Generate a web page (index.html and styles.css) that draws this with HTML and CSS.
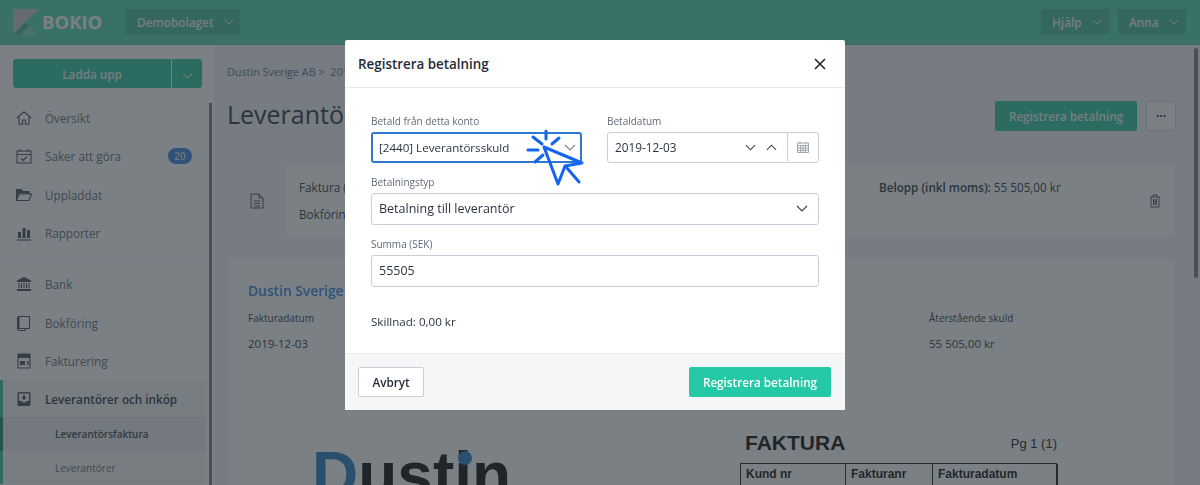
FILE: index.html
```html
<!DOCTYPE html>
<html lang="sv">
<head>
  <meta charset="UTF-8">
  <title>Bokio - Registrera betalning</title>
  <link rel="stylesheet" href="styles.css">
</head>
<body>

<div class="app">
  <header class="topbar">
    <svg class="logo-mark" viewBox="0 0 26 26" width="26" height="26">
      <polygon points="0,0 26,0 12,13 0,26" fill="#c4c8cc"/>
      <polygon points="12,13 26,26 0,26" fill="#7fd8c0"/>
      <polygon points="12,13 16,17 7,26 0,26" fill="#4fb39c"/>
    </svg>
    <span class="logo-text">BOKIO</span>
    <button class="top-btn company">Demobolaget
      <svg class="chev" viewBox="0 0 12 7" width="10" height="6"><path d="M1 1l5 5 5-5"/></svg>
    </button>
    <div class="top-right">
      <button class="top-btn">Hjälp
        <svg class="chev" viewBox="0 0 12 7" width="10" height="6"><path d="M1 1l5 5 5-5"/></svg>
      </button>
      <button class="top-btn">Anna
        <svg class="chev" viewBox="0 0 12 7" width="10" height="6"><path d="M1 1l5 5 5-5"/></svg>
      </button>
    </div>
  </header>

  <div class="layout">
    <aside class="sidebar">
      <div class="upload">
        <button class="upload-main">Ladda upp</button>
        <button class="upload-more">
          <svg class="chev" viewBox="0 0 12 7" width="11" height="6"><path d="M1 1l5 5 5-5"/></svg>
        </button>
      </div>
      <nav class="nav-section">
        <a class="nav-item">
          <svg class="nav-icon" viewBox="0 0 16 16"><path d="M.8 8L8 1.8 15.2 8M3 7v7.2h3.6V10h2.8v4.2H13V7"/></svg>
          Översikt
        </a>
        <a class="nav-item">
          <svg class="nav-icon" viewBox="0 0 16 16"><path d="M1 3h14v12H1zM1 6.5h14M4 1v3M12 1v3M5 10.5l2 2 4-4"/></svg>
          Saker att göra
          <span class="badge">20</span>
        </a>
        <a class="nav-item">
          <svg class="nav-icon" viewBox="0 0 16 16"><path class="solid" d="M.5 2.5h5l1.500 2h6v2H3L.5 13z"/><path d="M.5 13V2.500h5l1.500 2h6v2.500M3 7h12.500l-2.500 6.500H.5z"/></svg>
          Uppladdat
        </a>
        <a class="nav-item">
          <svg class="nav-icon" viewBox="0 0 16 16"><path class="solid" d="M2 7h3v6H2zM6.500 3h3v10h-3zM11 5h3v8h-3z"/><path d="M1 15h14"/></svg>
          Rapporter
        </a>
      </nav>
      <nav class="nav-section second">
        <a class="nav-item">
          <svg class="nav-icon" viewBox="0 0 16 16"><path class="solid" d="M8 1l7 3.500V6H1V4.500zM1 13h14v2H1z"/><path d="M3 7v5M5.500 7v5M8 7v5M10.500 7v5M13 7v5"/></svg>
          Bank
        </a>
        <a class="nav-item">
          <svg class="nav-icon" viewBox="0 0 16 16"><path d="M3 1.500h10.500v12H3zM3 1.500L1.500 2.500v12l2 1h6v-2"/><path class="solid" d="M1.500 2.500L3 1.500v12l-1.500 1z"/></svg>
          Bokföring
        </a>
        <a class="nav-item">
          <svg class="nav-icon" viewBox="0 0 16 16"><path d="M2 1h12v14H2z"/><path class="solid" d="M2 1h12v4H2zM4 8h5v4H4zM11 8h1.500v4H11z"/></svg>
          Fakturering
        </a>
        <a class="nav-item active">
          <svg class="nav-icon" viewBox="0 0 16 16"><path class="solid" fill-rule="evenodd" d="M3 1h10a1.500 1.500 0 0 1 1.500 1.500v11A1.500 1.500 0 0 1 13 15H3a1.500 1.500 0 0 1-1.500-1.500v-11A1.500 1.500 0 0 1 3 1zm0 1.500V10h2.500l1 1.500h3l1-1.500H13V2.500zM7 4h2v2.500h1.700L8 9.200 5.300 6.500H7z"/></svg>
          Leverantörer och inköp
        </a>
        <a class="nav-sub current">Leverantörsfaktura</a>
        <a class="nav-sub">Leverantörer</a>
      </nav>
    </aside>

    <main class="content">
      <div class="breadcrumb">Dustin Sverige AB &gt;&nbsp; 2019-12-03</div>
      <div class="title-row">
        <h1>Leverantörsfaktura</h1>
        <div class="actions">
          <button class="btn-primary">Registrera betalning</button>
          <button class="btn-dots">•••</button>
        </div>
      </div>

      <div class="info-row">
        <svg class="doc-icon" viewBox="0 0 14 16" width="14" height="16"><path d="M1 1h8l4 4v10H1zM9 1v4h4M4 8h6M4 10.500h6M4 13h6"/></svg>
        <div class="info-box">
          <div class="info-left">
            <p>Faktura (inkl moms)</p>
            <p>Bokföring</p>
          </div>
          <div class="info-right"><b>Belopp (inkl moms):</b> 55 505,00 kr</div>
          <svg class="trash-icon" viewBox="0 0 12 14" width="12" height="14"><path d="M1 3h10M4 3V1h4v2M2 3v10h8V3M4.500 5v6M6 5v6M7.500 5v6"/></svg>
        </div>
      </div>

      <section class="invoice">
        <h2>Dustin Sverige AB</h2>
        <div class="invoice-facts">
          <div><span>Fakturadatum</span><p>2019-12-03</p></div>
          <div><span>Förfallodatum</span><p>2020-01-02</p></div>
          <div><span>Fakturanummer</span><p>1234</p></div>
          <div><span>Återstående skuld</span><p>55 505,00 kr</p></div>
        </div>
        <div class="doc">
          <div class="doc-logo"><em>D</em>ustin<i class="doc-logo-dot"></i></div>
          <div class="doc-head">
            <div class="doc-title"><strong>FAKTURA</strong><span>Pg 1 (1)</span></div>
            <div class="doc-table">
              <b>Kund nr</b><b>Fakturanr</b><b>Fakturadatum</b>
            </div>
          </div>
        </div>
      </section>
    </main>
  </div>
  <div class="main-scroll"></div>
  <div class="side-scroll"></div>
</div>

<div class="backdrop">
  <div class="modal">
    <div class="modal-head">
      <h3>Registrera betalning</h3>
      <svg class="close" viewBox="0 0 12 12" width="12" height="12"><path d="M1 1l10 10M11 1L1 11"/></svg>
    </div>
    <div class="modal-body">
      <div class="field-row">
        <div class="field">
          <label>Betald från detta konto</label>
          <div class="control focused">[2440] Leverantörsskuld
            <svg class="chev" viewBox="0 0 12 7" width="12" height="7"><path d="M1 1l5 5 5-5"/></svg>
          </div>
        </div>
        <div class="field">
          <label>Betaldatum</label>
          <div class="control date">
            <span class="date-value">2019-12-03</span>
            <svg class="chev" viewBox="0 0 12 7" width="11" height="7"><path d="M1 1l5 5 5-5"/></svg>
            <svg class="chev" viewBox="0 0 12 7" width="11" height="7"><path d="M1 6l5-5 5 5"/></svg>
            <span class="date-cal">
              <svg class="cal" viewBox="0 0 12 12" width="12" height="12"><path d="M.5 2h11v9.500H.5zM.5 4.500h11M3 .5v2.500M9 .5v2.500M3.500 4.500v7M6 4.500v7M8.500 4.500v7M.5 7h11M.5 9.200h11"/></svg>
            </span>
          </div>
        </div>
      </div>
      <div class="field">
        <label>Betalningstyp</label>
        <div class="control tall">Betalning till leverantör
          <svg class="chev" viewBox="0 0 12 7" width="12" height="7"><path d="M1 1l5 5 5-5"/></svg>
        </div>
      </div>
      <div class="field">
        <label>Summa (SEK)</label>
        <div class="control tall">55505</div>
      </div>
      <p class="diff">Skillnad: 0,00 kr</p>
    </div>
    <div class="modal-foot">
      <button class="btn-cancel">Avbryt</button>
      <button class="btn-submit">Registrera betalning</button>
    </div>
    <svg class="click-cursor" viewBox="525 128 60 60" width="60" height="60">
      <path d="M544 147l38 16-17 3-7 18z"/>
      <path d="M567 168l12 14M546 131v8M533 137l9 7M559 138l-7 6M528 150h10M543 155l-8 7"/>
    </svg>
  </div>
</div>

</body>
</html>
```

FILE: styles.css
```css
* {
  box-sizing: border-box;
}

html, body {
  margin: 0;
  height: 100%;
  overflow: hidden;
}

body {
  font-family: 'Open Sans', 'Noto Sans', sans-serif;
  font-size: 11.7px;
  color: #2e3a48;
  background: #f2f4f9;
}

button {
  font-family: inherit;
  border: none;
}

.chev path {
  fill: none;
  stroke: currentColor;
  stroke-width: 1.2;
}

/* page under the dialog */

.app {
  height: 485px;
  overflow: hidden;
  position: relative;
}

.topbar {
  height: 45px;
  padding: 9px 14px 0 13px;
  display: flex;
  align-items: flex-start;
  background: #55d8b2;
  border-bottom: 1px solid #4fc6a5;
}

.logo-mark {
  flex: none;
}

.logo-text {
  margin-left: 3px;
  width: 83px;
  line-height: 26px;
  font-size: 18.5px;
  font-weight: 700;
  color: #fff;
}

.top-btn {
  width: 68px;
  height: 25px;
  padding: 0 0 0 11px;
  display: flex;
  align-items: center;
  gap: 10px;
  font-size: 11.8px;
  font-weight: 600;
  color: #f2f4f5;
  background: #45bd9f;
}

.top-btn.company {
  width: 115px;
  padding-left: 12px;
}

.top-right {
  margin-left: auto;
  display: flex;
  gap: 9px;
}

.layout {
  display: flex;
  height: 440px;
}

.sidebar {
  width: 216px;
  flex: none;
  padding-top: 14px;
  background: #fff;
  border-right: 1px solid #eceef2;
}

.upload {
  margin: 0 13px;
  height: 29px;
  display: flex;
  gap: 1px;
}

.upload-main, .upload-more {
  background: #2fc9a3;
  color: #f2f4f5;
  font-size: 11.7px;
  font-weight: 600;
}

.upload-main {
  width: 158px;
  border-radius: 3px 0 0 3px;
}

.upload-more {
  flex: 1;
  border-radius: 0 3px 3px 0;
}

.nav-section {
  margin-top: 11px;
  padding-bottom: 6px;
  width: 206px;
  border-bottom: 1px solid #eef0f3;
}

.nav-section.second {
  margin-top: 0;
  padding-top: 6px;
  border-bottom: none;
}

.nav-item {
  height: 38.33px;
  padding-left: 16px;
  display: flex;
  align-items: center;
  font-size: 11.7px;
  color: #66707d;
}

.nav-icon {
  width: 16px;
  height: 16px;
  margin-right: 13px;
  flex: none;
  fill: none;
  stroke: #47515e;
  stroke-width: 1.1;
}

.nav-icon .solid {
  fill: #47515e;
  stroke: none;
}

.badge {
  margin-left: auto;
  margin-right: 14px;
  width: 24px;
  height: 16px;
  border-radius: 8px;
  background: #3a86e0;
  color: #dfe6ee;
  font-size: 10px;
  font-weight: 600;
  line-height: 16px;
  text-align: center;
}

.nav-item.active {
  height: 37px;
  padding-left: 13px;
  border-left: 3px solid #3cc6a4;
  background: #f6f7f9;
  color: #2e3a48;
  font-weight: 600;
}

.nav-sub {
  height: 33.5px;
  padding-left: 52px;
  display: flex;
  align-items: center;
  border-left: 3px solid #3cc6a4;
  background: #f6f7f9;
  font-size: 10px;
  color: #66707d;
}

.nav-sub.current {
  border-left-color: #188f76;
  background: #ebedf1;
  color: #3b4653;
  font-weight: 600;
}

.side-scroll {
  position: absolute;
  left: 209px;
  top: 103px;
  bottom: 0;
  width: 3px;
  background: #7b7f86;
}

.main-scroll {
  position: absolute;
  left: 1194px;
  top: 48px;
  width: 4px;
  height: 230px;
  border-radius: 2px;
  background: #7b7f86;
}

.content {
  flex: 1;
  padding: 19px 24px 0 11px;
  min-width: 0;
}

.breadcrumb {
  height: 16px;
  line-height: 16px;
  font-size: 10.8px;
  color: #66707d;
}

.title-row {
  margin-top: 16px;
  height: 36px;
  display: flex;
  align-items: center;
  justify-content: space-between;
}

h1 {
  margin: 0;
  font-size: 25px;
  font-weight: 400;
  line-height: 36px;
  color: #2e3a48;
}

.actions {
  display: flex;
  gap: 9px;
  margin-top: 3px;
}

.btn-primary {
  width: 142px;
  height: 30px;
  border-radius: 2px;
  background: #2fc9a3;
  color: #f2f4f5;
  font-size: 11.7px;
  font-weight: 600;
}

.btn-dots {
  width: 30px;
  height: 30px;
  padding: 0;
  border: 1px solid #d6d9de;
  border-radius: 2px;
  background: #fff;
  color: #1f2b38;
  font-size: 9px;
  line-height: 28px;
}

.info-row {
  margin-top: 31px;
  display: flex;
  align-items: center;
}

.doc-icon, .trash-icon {
  fill: none;
  stroke: #4a5561;
  stroke-width: 1;
  flex: none;
}

.doc-icon {
  margin: 0 21px 0 23px;
}

.info-box {
  flex: 1;
  height: 75px;
  padding: 0 14px 0 13px;
  display: grid;
  grid-template-columns: 580px 1fr auto;
  align-items: center;
  border: 1px solid #eceef2;
  background: #fff;
}

.info-left p {
  margin: 0;
  line-height: 27px;
  white-space: nowrap;
}

.info-right {
  align-self: start;
  padding-top: 15px;
}

.info-right b {
  font-weight: 600;
}

.invoice {
  margin-top: 20px;
  height: 300px;
  padding: 22px 20px 0;
  background: #fff;
  border: 1px solid #eceef2;
  overflow: hidden;
}

.invoice h2 {
  margin: 0;
  font-size: 13.8px;
  font-weight: 600;
  line-height: 20px;
  color: #3a86e0;
}

.invoice-facts {
  margin-top: 9px;
  display: grid;
  grid-template-columns: repeat(4, 227px);
}

.invoice-facts span {
  display: block;
  line-height: 16px;
  font-size: 10px;
}

.invoice-facts p {
  margin: 9px 0 0;
  line-height: 18px;
  font-size: 11.5px;
}

.doc {
  margin-top: 78px;
  padding-left: 64px;
  display: grid;
  grid-template-columns: 428px 317px;
  font-family: 'Liberation Sans', Arial, sans-serif;
  color: #111;
}

.doc-logo {
  position: relative;
  margin-top: 12px;
  font-size: 64px;
  font-weight: 700;
  line-height: 1;
}

.doc-logo em {
  font-style: normal;
  color: #2a7fc4;
}

.doc-logo-dot {
  position: absolute;
  left: 146px;
  top: 8px;
  width: 14px;
  height: 14px;
  border-radius: 50%;
  background: #2a7fc4;
}

.doc-title {
  height: 32px;
  padding: 0 0 8px 5px;
  display: flex;
  justify-content: space-between;
  align-items: center;
}

.doc-title strong {
  font-size: 21px;
}

.doc-title span {
  font-size: 13px;
  color: #222;
}

.doc-table {
  display: grid;
  grid-template-columns: 105px 87px 125px;
  border: 1px solid #222;
  height: 40px;
}

.doc-table b {
  padding: 3px 5px;
  font-size: 12px;
  border-right: 1px solid #222;
}

/* dialog */

.backdrop {
  position: fixed;
  inset: 0;
  display: flex;
  justify-content: center;
  align-items: flex-start;
  padding: 40px 10px 0 0;
  background: rgba(42, 50, 57, .62);
}

.modal {
  position: relative;
  width: 500px;
  height: 370px;
  background: #fff;
  border-radius: 2px;
  display: flex;
  flex-direction: column;
}

.modal-head {
  height: 48px;
  padding: 0 19px 0 13px;
  display: flex;
  align-items: center;
  justify-content: space-between;
  border-bottom: 1px solid #e9ebee;
}

h3 {
  margin: 0;
  font-size: 13.4px;
  font-weight: 600;
  color: #1f2b38;
}

.close path {
  fill: none;
  stroke: #1f2630;
  stroke-width: 1.6;
}

.modal-body {
  flex: 1;
  padding: 25px 26px 0;
}

.field-row {
  display: grid;
  grid-template-columns: 211px 212px;
  column-gap: 25px;
}

.field {
  margin-bottom: 11px;
}

.field label {
  display: block;
  height: 19px;
  line-height: 16px;
  font-size: 10px;
  color: #5e6b78;
}

.control {
  height: 31px;
  padding: 0 10px 1px 7px;
  display: flex;
  align-items: center;
  justify-content: space-between;
  border: 1px solid #c9ced4;
  border-radius: 3px;
  font-size: 12.5px;
  color: #2a3440;
}

.control.tall {
  height: 32px;
}

.control.focused {
  border: 2px solid #2f78cf;
  padding: 0 4px 1px 6px;
  font-size: 11.6px;
}

.control .chev {
  color: #3a4450;
}

.control.focused .chev {
  color: #7c858f;
}

.control.date {
  padding-right: 0;
  justify-content: flex-start;
  gap: 10px;
  font-size: 11.8px;
}

.date-value {
  flex: 1;
}

.date-cal {
  width: 31px;
  height: 100%;
  display: flex;
  align-items: center;
  justify-content: center;
  border-left: 1px solid #c9ced4;
}

.cal {
  fill: none;
  stroke: #a0a7ae;
  stroke-width: 1;
}

.diff {
  margin: 26px 0 0;
  line-height: 18px;
  font-size: 11.6px;
  color: #2a3440;
}

.modal-foot {
  height: 57px;
  padding: 0 14px 0 13px;
  display: flex;
  align-items: center;
  justify-content: space-between;
  border-top: 1px solid #e9ebee;
  background: #f5f6f8;
}

.btn-cancel, .btn-submit {
  height: 30px;
  border-radius: 2px;
  font-size: 11.7px;
  font-weight: 600;
}

.btn-cancel {
  width: 66px;
  border: 1px solid #c9ced4;
  background: #fff;
  color: #1f2b38;
}

.btn-submit {
  width: 142px;
  background: #26c9a5;
  color: #fff;
}

.click-cursor {
  position: absolute;
  left: 180px;
  top: 88px;
  overflow: visible;
  fill: none;
  stroke: #1464f0;
  stroke-width: 3;
  stroke-linecap: round;
  stroke-linejoin: round;
}
```
